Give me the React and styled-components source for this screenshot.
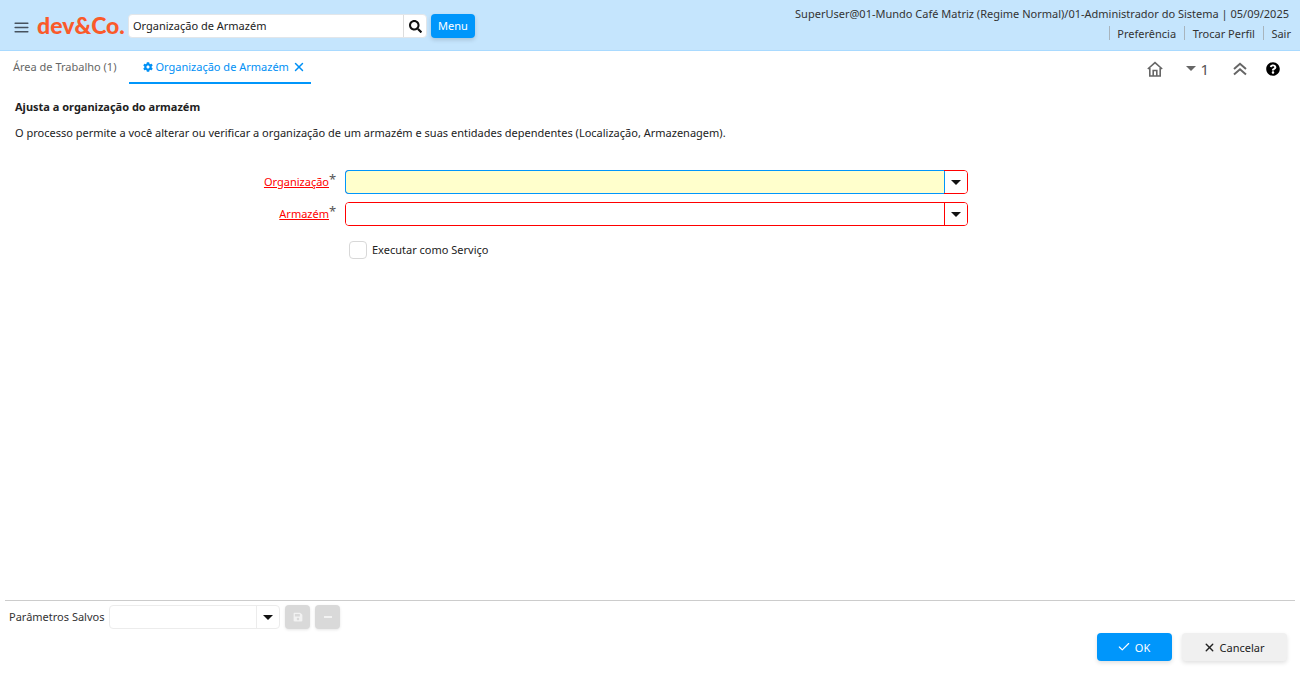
import React from "react";
import styled, { createGlobalStyle } from "styled-components";
import { FaSearch, FaCog, FaQuestionCircle, FaSave } from "react-icons/fa";
import { FiMenu, FiX, FiCheck } from "react-icons/fi";

const GlobalStyle = createGlobalStyle`
  html, body {
    margin: 0;
    height: 100%;
    background: #fff;
    font-family: "Noto Sans", sans-serif;
    font-size: 11px;
    color: #222;
  }
  #root { height: 100%; }
`;

const Page = styled.div`
  height: 674px;
  display: flex;
  flex-direction: column;
  overflow: hidden;
`;

// Top bar
const Header = styled.header`
  height: 50px;
  flex: none;
  display: flex;
  justify-content: space-between;
  background: #c5e5fd;
  border-bottom: 1px solid #a9daff;
`;

const HeaderLeft = styled.div`
  display: flex;
  align-items: center;
  padding: 2px 0 0 13px;
`;

const MenuIcon = styled(FiMenu)`
  font-size: 17px;
  color: #47525e;
  margin: 2px 7px 0 0;
`;

const Logo = styled.span`
  font-family: "Lato", sans-serif;
  font-weight: 900;
  font-size: 23px;
  line-height: 24px;
  color: #fa5a2a;
  width: 91px;
  white-space: nowrap;
  margin-top: -2px;
`;

const SearchBox = styled.div`
  display: flex;
  width: 297px;
  height: 22px;
  background: #fff;
  border: 1px solid #e2e6ea;
  border-radius: 4px;
`;

const SearchInput = styled.div`
  flex: 1;
  padding-left: 4px;
  line-height: 22px;
  color: #222;
`;

const SearchButton = styled.div`
  width: 22px;
  display: flex;
  align-items: center;
  justify-content: center;
  border-left: 1px solid #ddd;
  font-size: 13px;
  color: #111;
`;

const MenuButton = styled.div`
  margin-left: 4px;
  width: 44px;
  height: 24px;
  border-radius: 4px;
  background: #0096fb;
  color: #fff;
  line-height: 24px;
  text-align: center;
  box-shadow: 0 2px 4px rgba(0, 0, 0, 0.15);
`;

const HeaderRight = styled.div`
  display: flex;
  flex-direction: column;
  align-items: flex-end;
  padding: 6px 9px 0 0;
  color: #333;
`;

const SessionLine = styled.div`
  line-height: 16px;
  margin-right: 2px;
`;

const HeaderLinks = styled.div`
  display: flex;
  margin-top: 4px;
`;

const HeaderLink = styled.span`
  height: 14px;
  line-height: 15px;
  margin-left: 8px;
  padding-left: 7.5px;
  border-left: 1px solid #a8b4bd;
`;

// Tabs
const TabBar = styled.div`
  height: 33px;
  flex: none;
  display: flex;
  justify-content: space-between;
`;

const Tabs = styled.div`
  display: flex;
  padding-left: 5px;
`;

const Tab = styled.div`
  display: flex;
  align-items: center;
  gap: 2px;
  height: 33px;
  box-sizing: border-box;
  color: #666;
  padding: 0 8px;
  margin-right: 5px;
  border-bottom: 2px solid transparent;
`;

const ActiveTab = styled(Tab)`
  color: #0090f5;
  padding: 0 5px 0 14px;
  margin-right: 0;
  border-bottom-color: #0096fb;
`;

const TabClose = styled(FiX)`
  font-size: 14px;
  margin-left: 1px;
  stroke-width: 2.5;
`;

const TabTools = styled.div`
  display: flex;
  align-items: center;
  padding: 2px 20px 0 0;
`;

const ToolItem = styled.span`
  display: flex;
  align-items: center;
  margin-left: ${(p) => p.$gap || 0}px;
  font-size: ${(p) => p.$size || 14}px;
  color: ${(p) => p.$color || "#555"};
`;

const Caret = styled.span`
  width: 0;
  height: 0;
  border-left: 5px solid transparent;
  border-right: 5px solid transparent;
  border-top: 5px solid ${(p) => p.$color || "#111"};
`;

// Process body
const Content = styled.main`
  flex: 1;
  padding: 16px 15px 0;
`;

const Title = styled.div`
  font-weight: 700;
  line-height: 14px;
  color: #222;
`;

const Description = styled.div`
  margin-top: 12px;
  line-height: 14px;
  color: #222;
`;

const Form = styled.div`
  margin-top: 30px;
  display: grid;
  grid-template-columns: 320px 623px;
  column-gap: 10px;
  row-gap: 8px;
  align-items: center;
`;

const FieldLabel = styled.label`
  position: relative;
  justify-self: end;
  margin-right: 6px;
  color: #f00;
  text-decoration: underline;
  line-height: 24px;
`;

const Required = styled.span`
  position: absolute;
  left: 100%;
  top: -3px;
  color: #555;
  font-size: 13px;
`;

const ComboBox = styled.div`
  display: flex;
  height: 24px;
  box-sizing: border-box;
  border: 1px solid #f00;
  border-radius: 4px;
`;

const ComboInput = styled.div`
  flex: 1;
  background: ${(p) => (p.$focused ? "#ffffcc" : "#fff")};
  border-radius: 3px 0 0 3px;
  ${(p) =>
    p.$focused &&
    `
    margin: -1px 0 -1px -1px;
    border: 1px solid #0096fb;
    border-right: 0;
    border-radius: 4px 0 0 4px;
  `}
`;

const ComboButton = styled.div`
  width: 22px;
  display: flex;
  align-items: center;
  justify-content: center;
  background: #fff;
  border-radius: 0 3px 3px 0;
  border-left: 1px solid ${(p) => (p.$focused ? "#0096fb" : "#f00")};
`;

const ServiceRow = styled.div`
  grid-column: 2;
  display: flex;
  align-items: center;
  gap: 5px;
  margin: 7px 0 0 4px;
`;

const ServiceLabel = styled.span`
  margin-bottom: 2px;
`;

const Checkbox = styled.span`
  width: 16px;
  height: 16px;
  border: 1px solid #d8d8d8;
  border-radius: 4px;
`;

// Footer
const Footer = styled.footer`
  flex: none;
  height: 74px;
  margin: 0 5px;
  box-sizing: border-box;
  border-top: 1px solid #ccc;
`;

const ParamsRow = styled.div`
  display: flex;
  align-items: center;
  height: 24px;
  margin-top: 4px;
  padding-left: 4px;
  color: #333;
`;

const ParamsLabel = styled.span`
  margin-bottom: 2px;
`;

const ParamsCombo = styled.div`
  display: flex;
  margin-left: 5px;
  width: 171px;
  height: 24px;
  box-sizing: border-box;
  border: 1px solid #ececec;
  border-radius: 4px;
`;

const ParamsInput = styled.div`
  flex: 1;
`;

const ParamsCaret = styled.div`
  width: 22px;
  display: flex;
  align-items: center;
  justify-content: center;
  border-left: 1px solid #ececec;
`;

const IconButton = styled.div`
  width: 25px;
  height: 24px;
  margin-left: 5px;
  display: flex;
  align-items: center;
  justify-content: center;
  border-radius: 4px;
  background: #d9d9d9;
  color: #f2f2f2;
  font-size: 10px;
  box-shadow: 0 1px 3px rgba(0, 0, 0, 0.1);
`;

const Dash = styled.span`
  width: 8px;
  height: 1.5px;
  background: #f2f2f2;
`;

const Actions = styled.div`
  display: flex;
  justify-content: flex-end;
  gap: 10px;
  margin-top: 4px;
  padding-right: 8px;
`;

const ActionButton = styled.div`
  width: ${(p) => (p.$primary ? 75 : 105)}px;
  height: 28px;
  box-sizing: border-box;
  padding-right: 2px;
  display: flex;
  align-items: center;
  justify-content: center;
  gap: 4px;
  border-radius: 4px;
  background: ${(p) => (p.$primary ? "#0096fb" : "#f0f0f0")};
  color: ${(p) => (p.$primary ? "#fff" : "#222")};
  box-shadow: 0 2px 4px rgba(0, 0, 0, 0.12);
  font-size: 11px;
  svg {
    font-size: ${(p) => (p.$primary ? 14 : 13)}px;
    stroke-width: ${(p) => (p.$primary ? 2 : 2.5)};
  }
`;

const HomeIcon = () => (
  <svg width="16" height="16" viewBox="0 0 16 16" fill="none" stroke="#666" strokeWidth="1.6">
    <path d="M0.8 8 L8 1.6 L15.2 8" />
    <path d="M2.8 7 V15 H13.2 V7" />
    <path d="M6.2 15 V9.5 H9.8 V15" />
  </svg>
);

const DoubleUpIcon = () => (
  <svg width="14" height="14" viewBox="0 0 14 14" fill="none" stroke="#666" strokeWidth="2">
    <path d="M1 7 L7 1.8 L13 7" />
    <path d="M1 12.5 L7 7.3 L13 12.5" />
  </svg>
);

export default function App() {
  return (
    <Page>
      <GlobalStyle />
      <Header>
        <HeaderLeft>
          <MenuIcon />
          <Logo>dev&amp;Co.</Logo>
          <SearchBox>
            <SearchInput>Organização de Armazém</SearchInput>
            <SearchButton>
              <FaSearch />
            </SearchButton>
          </SearchBox>
          <MenuButton>Menu</MenuButton>
        </HeaderLeft>
        <HeaderRight>
          <SessionLine>
            SuperUser@01-Mundo Café Matriz (Regime Normal)/01-Administrador do Sistema | 05/09/2025
          </SessionLine>
          <HeaderLinks>
            <HeaderLink>Preferência</HeaderLink>
            <HeaderLink>Trocar Perfil</HeaderLink>
            <HeaderLink>Sair</HeaderLink>
          </HeaderLinks>
        </HeaderRight>
      </Header>

      <TabBar>
        <Tabs>
          <Tab>Área de Trabalho (1)</Tab>
          <ActiveTab>
            <FaCog size={10} />
            Organização de Armazém
            <TabClose />
          </ActiveTab>
        </Tabs>
        <TabTools>
          <ToolItem>
            <HomeIcon />
          </ToolItem>
          <ToolItem $gap={23}>
            <Caret $color="#666" />
          </ToolItem>
          <ToolItem $gap={4} $size={15}>1</ToolItem>
          <ToolItem $gap={24}>
            <DoubleUpIcon />
          </ToolItem>
          <ToolItem $gap={19} $color="#000">
            <FaQuestionCircle />
          </ToolItem>
        </TabTools>
      </TabBar>

      <Content>
        <Title>Ajusta a organização do armazém</Title>
        <Description>
          O processo permite a você alterar ou verificar a organização de um armazém e suas entidades dependentes (Localização, Armazenagem).
        </Description>
        <Form>
          <FieldLabel>
            Organização<Required>*</Required>
          </FieldLabel>
          <ComboBox>
            <ComboInput $focused />
            <ComboButton $focused>
              <Caret />
            </ComboButton>
          </ComboBox>
          <FieldLabel>
            Armazém<Required>*</Required>
          </FieldLabel>
          <ComboBox>
            <ComboInput />
            <ComboButton>
              <Caret />
            </ComboButton>
          </ComboBox>
          <ServiceRow>
            <Checkbox />
            <ServiceLabel>Executar como Serviço</ServiceLabel>
          </ServiceRow>
        </Form>
      </Content>

      <Footer>
        <ParamsRow>
          <ParamsLabel>Parâmetros Salvos</ParamsLabel>
          <ParamsCombo>
            <ParamsInput />
            <ParamsCaret>
              <Caret />
            </ParamsCaret>
          </ParamsCombo>
          <IconButton>
            <FaSave />
          </IconButton>
          <IconButton>
            <Dash />
          </IconButton>
        </ParamsRow>
        <Actions>
          <ActionButton $primary>
            <FiCheck />
            OK
          </ActionButton>
          <ActionButton>
            <FiX />
            Cancelar
          </ActionButton>
        </Actions>
      </Footer>
    </Page>
  );
}
